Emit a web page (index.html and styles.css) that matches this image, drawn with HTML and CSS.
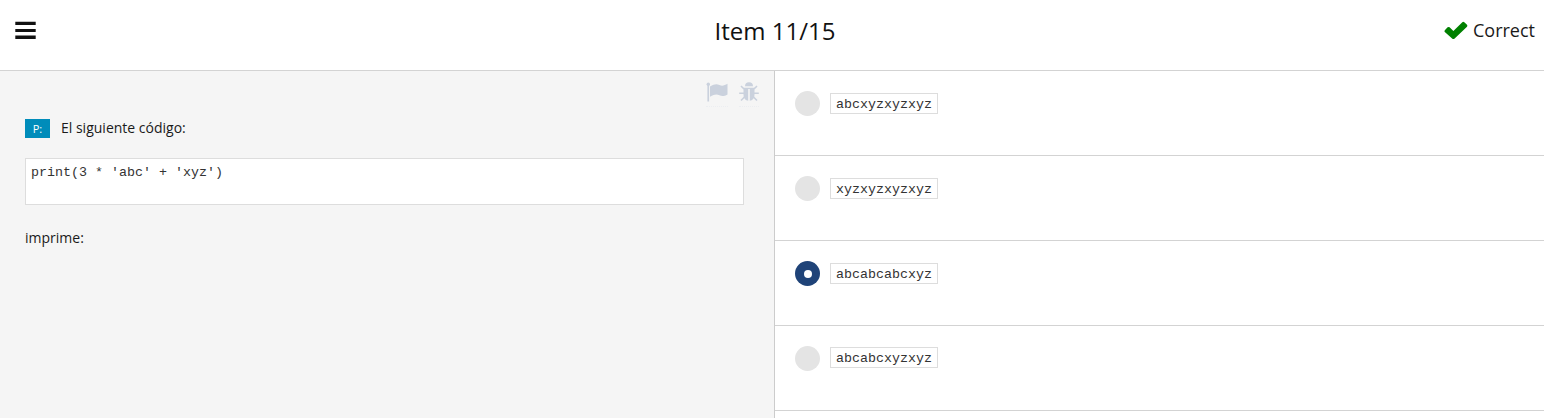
FILE: index.html
```html
<!DOCTYPE html>
<html lang="es">
<head>
<meta charset="utf-8">
<title>Item 11/15</title>
<link rel="stylesheet" href="styles.css">
</head>
<body>
<header class="topbar">
  <svg class="menu" viewBox="0 0 21 18" width="21" height="18"><path d="M.3.8h20.400V4H.3zM.3 7.900h20.400v3.200H.3zM.3 14.500h20.400V18H.3z"/></svg>
  <h1 class="title">Item 11/15</h1>
  <div class="result">
    <svg class="check" viewBox="0 0 24 19" width="24" height="19"><path d="M.8 9.200 3.600 6.300q1-.8 2 0L9.400 10.100 18.300 1.200q1-.8 2 0l2.700 2.600q.8 1 0 1.900L10.400 17.700q-1 .8-2 0L.8 11.100q-.8-1 0-1.900z"/></svg>
    <span class="result-text">Correct</span>
  </div>
</header>
<main class="columns">
  <section class="question">
    <div class="tools">
      <a class="tool tool-flag"><svg viewBox="0 0 22 20" width="22" height="20"><circle cx="2.300" cy="2.200" r="1.700"/><path d="M1.400 2h1.700v17.500H1.400zM4 4.400C8.500 1.700 11 1.700 13.500 3c2.500 1.300 5 .5 8-1.200v10.600c-3 1.800-5.500 2.100-8 .9C10.500 12 8.500 12.300 4 14.800z"/></svg></a>
      <a class="tool tool-bug"><svg viewBox="0 0 20 20" width="20" height="20"><path d="M6 4.200a4 4 0 0 1 8 0z"/><path d="M4.500 5.700h11v7c0 3.800-2 5.800-4.700 6V7H9.200v11.700c-2.700-.2-4.700-2.200-4.700-6z"/><path class="legs" d="M5 7 2 4M15 7l3-3M5 11.300H.2M15 11.300h4.800M5.500 15 2 18.500M14.500 15l3.500 3.500"/></svg></a>
    </div>
    <div class="prompt"><span class="tag">P:</span><span>El siguiente código:</span></div>
    <pre class="snippet">print(3 * 'abc' + 'xyz')</pre>
    <p class="after">imprime:</p>
  </section>
  <section class="answers">
    <div class="answer"><span class="radio"></span><code class="option">abcxyzxyzxyz</code></div>
    <div class="answer"><span class="radio"></span><code class="option">xyzxyzxyzxyz</code></div>
    <div class="answer"><span class="radio selected"></span><code class="option">abcabcabcxyz</code></div>
    <div class="answer last"><span class="radio"></span><code class="option">abcabcxyzxyz</code></div>
  </section>
</main>
</body>
</html>
```
FILE: styles.css
```css
* { box-sizing: border-box; }
body {
  margin: 0;
  height: 418px;
  overflow: hidden;
  background: #fff;
  color: #1a1a1a;
  font: 14px/20px "Open Sans", sans-serif;
  display: flex;
  flex-direction: column;
}
svg { display: block; }
.topbar {
  height: 71px;
  flex: none;
  border-bottom: 1px solid #d3d3d3;
  display: grid;
  grid-template-columns: 1fr auto 1fr;
  align-items: start;
  padding: 0 9px 0 15px;
}
.menu { margin-top: 21px; fill: #111; }
.title {
  margin: 15px 0 0;
  font-size: 24px;
  line-height: 32px;
  font-weight: 400;
  color: #111;
}
.result {
  justify-self: end;
  display: flex;
  margin-top: 18px;
  font-size: 18px;
  line-height: 24px;
}
.check { fill: #008000; margin: 3px 5px 0 0; }
.columns { flex: 1; display: flex; min-height: 0; }
.question {
  width: 775px;
  flex: none;
  background: #f5f5f5;
  border-right: 1px solid #ccc;
  padding: 11px 30px 0 25px;
}
.tools {
  display: flex;
  justify-content: flex-end;
  gap: 11px;
  height: 26px;
  margin-right: -15px;
}
.tool { height: 25px; border-bottom: 1px dotted #eceef1; }
.tool svg { fill: #cad1dd; }
.tool .legs { stroke: #cad1dd; stroke-width: 1.6; fill: none; }
.prompt { display: flex; gap: 11px; margin-top: 10px; height: 20px; }
.tag {
  width: 25px;
  height: 19px;
  margin-top: 1px;
  background: #008cba;
  color: #fff;
  font-size: 11px;
  line-height: 20px;
  text-align: center;
}
.snippet, .option {
  font-family: "Liberation Mono", monospace;
  font-size: 13.333px;
  color: #333;
  background: #fff;
  border: 1px solid #ddd;
}
.snippet {
  height: 47px;
  margin: 20px 0 0;
  padding: 4px 5px;
  line-height: 20px;
}
.after { margin: 23px 0 0; }
.answers { flex: 1; }
.answer {
  height: 85px;
  border-bottom: 1px solid #d3d3d3;
  display: flex;
  align-items: flex-start;
  gap: 10px;
  padding: 20px 20px 0;
}
.radio {
  width: 25px;
  height: 25px;
  border-radius: 50%;
  background: #e4e4e4;
  display: flex;
  align-items: center;
  justify-content: center;
}
.selected { background: #1f4378; }
.selected::after {
  content: "";
  width: 8px;
  height: 8px;
  border-radius: 50%;
  background: #fff;
}
.option {
  height: 21px;
  margin-top: 2px;
  padding: 1px 5px 0;
  line-height: 20px;
}
.last .option { margin-top: 1px; }
```
